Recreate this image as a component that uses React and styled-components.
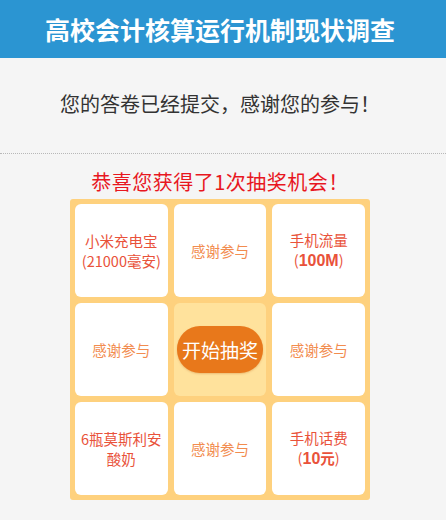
import React from "react";
import styled, { createGlobalStyle } from "styled-components";

const Global = createGlobalStyle`
  html, body { margin: 0; padding: 0; background: #f5f5f5; }
  body { font-family: "Noto Sans CJK SC", "Noto Sans", sans-serif; }
`;

const Page = styled.div`
  width: 446px;
  min-height: 520px;
  background: #f5f5f5;
  display: flex;
  flex-direction: column;
`;

const Header = styled.header`
  height: 58px;
  background: #2b95d2;
  color: #fff;
  display: flex;
  align-items: center;
  justify-content: center;
  padding-right: 6px;
  font-size: 25px;
  font-weight: 700;
`;

const Notice = styled.div`
  height: 96px;
  display: flex;
  align-items: center;
  justify-content: center;
  font-size: 20px;
  color: #333;
  padding: 0 6px 4px 0;
  box-sizing: border-box;
  border-bottom: 1px dotted #b8b8b8;
`;

const Lottery = styled.section`
  display: flex;
  flex-direction: column;
  align-items: center;
  padding: 14px 6px 0 0;
`;

const Congrats = styled.div`
  font-size: 20px;
  letter-spacing: 0.5px;
  color: #e8171f;
  line-height: 28px;
  margin-bottom: 3px;
`;

const Board = styled.div`
  width: 300px;
  box-sizing: border-box;
  padding: 5px;
  background: #fed17e;
  border-radius: 3px;
  display: grid;
  grid-template-columns: repeat(3, 1fr);
  grid-auto-rows: 93px;
  gap: 6px;
`;

const Cell = styled.div`
  background: ${(p) => (p.$center ? "#ffe29c" : "#fff")};
  border-radius: 6px;
  display: flex;
  align-items: center;
  justify-content: center;
  text-align: center;
  padding: 0 3px;
`;

const Prize = styled.span`
  display: block;
  font-size: 14.5px;
  line-height: 20px;
  color: ${(p) => (p.$dim ? "#f28c4f" : "#e9523a")};
`;

const Strong = styled.b`
  font-family: "Liberation Sans", Arial, sans-serif;
  font-weight: 700;
  font-size: 16px;
`;

const StrongCJK = styled.b`
  font-weight: 700;
`;

const StartButton = styled.button`
  width: 86px;
  height: 47px;
  border: none;
  border-radius: 23px;
  background: #e8781b;
  color: #fff;
  font-family: "Noto Sans CJK SC", sans-serif;
  font-size: 19px;
  padding: 0;
  cursor: pointer;
  box-shadow: 0 1px 2px rgba(180, 80, 0, 0.25);
`;

export default function App() {
  return (
    <Page>
      <Global />
      <Header>高校会计核算运行机制现状调查</Header>
      <Notice>您的答卷已经提交，感谢您的参与！</Notice>
      <Lottery>
        <Congrats>恭喜您获得了1次抽奖机会！</Congrats>
        <Board>
          <Cell>
            <Prize>
              小米充电宝
              <br />
              (21000毫安)
            </Prize>
          </Cell>
          <Cell>
            <Prize $dim>感谢参与</Prize>
          </Cell>
          <Cell>
            <Prize>
              手机流量
              <br />
              (<Strong>100M</Strong>)
            </Prize>
          </Cell>
          <Cell>
            <Prize $dim>感谢参与</Prize>
          </Cell>
          <Cell $center>
            <StartButton>开始抽奖</StartButton>
          </Cell>
          <Cell>
            <Prize $dim>感谢参与</Prize>
          </Cell>
          <Cell>
            <Prize>
              6瓶莫斯利安
              <br />
              酸奶
            </Prize>
          </Cell>
          <Cell>
            <Prize $dim>感谢参与</Prize>
          </Cell>
          <Cell>
            <Prize>
              手机话费
              <br />
              (<Strong>10</Strong>
              <StrongCJK>元</StrongCJK>)
            </Prize>
          </Cell>
        </Board>
      </Lottery>
    </Page>
  );
}
